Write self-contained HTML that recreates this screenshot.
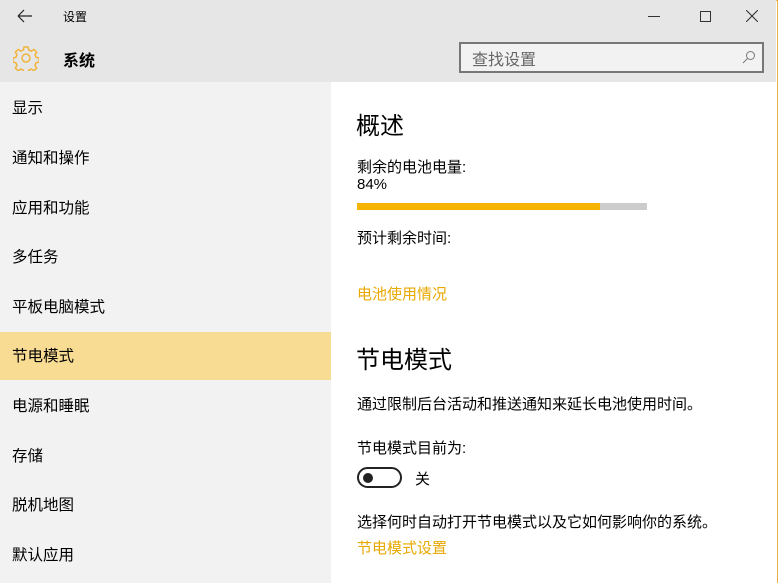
<!DOCTYPE html>
<html><head><meta charset="utf-8"><style>
*{margin:0;padding:0;box-sizing:border-box}
body{width:778px;height:583px;overflow:hidden;font-family:"Liberation Sans","Noto Sans CJK SC",sans-serif;background:#fff;position:relative;color:#000}
.win{position:absolute;left:0;top:0;width:778px;height:583px;border:1px solid #e8b04a;border-bottom:none}
.hdr{position:absolute;left:0;top:0;width:776px;height:82px;background:#e6e6e6}
.side{position:absolute;left:0;top:82px;width:331px;height:501px;background:#f2f2f2}
.it{position:absolute;left:12px;font-size:15.5px;line-height:20px}
.sel{position:absolute;left:0;top:332px;width:331px;height:48px;background:#f8dc94}
.t{position:absolute;white-space:nowrap}
.c{font-size:15px}
</style></head><body>
<div class="win"></div>
<div class="hdr"></div>
<svg class="t" style="left:17px;top:9px" width="16" height="14"><path d="M1 7H15M1 7L7 1M1 7L7 13" stroke="#222" stroke-width="1.2" fill="none"/></svg>
<div class="t" style="left:63px;top:8px;font-size:12px">设置</div>
<div class="t" style="left:648px;top:16px;width:12px;height:1px;background:#333"></div>
<div class="t" style="left:700px;top:11px;width:11px;height:11px;border:1px solid #333"></div>
<svg class="t" style="left:746px;top:10px" width="12" height="12"><path d="M0 0L12 12M12 0L0 12" stroke="#333" stroke-width="1.1"/></svg>
<svg class="t" style="left:13px;top:45px" width="26" height="26" viewBox="0 0 26 26"><g fill="none" stroke="#f0b43c" stroke-width="1.5"><circle cx="13" cy="13" r="4"/><path d="M11 2h4l.7 3 2.6 1.1 2.6-1.7 2.8 2.8-1.7 2.6 1.1 2.6 3 .7v4l-3 .7-1.1 2.6 1.7 2.6-2.8 2.8-2.6-1.7-2.6 1.1-.7 3h-4l-.7-3-2.6-1.1-2.6 1.7-2.8-2.8 1.7-2.6-1.1-2.6-3-.7v-4l3-.7 1.1-2.6-1.7-2.6 2.8-2.8 2.6 1.7 2.6-1.1z"/></g></svg>
<div class="t" style="left:63px;top:47px;font-size:16px;font-weight:bold">系统</div>
<div class="t" style="left:459px;top:42px;width:305px;height:31px;border:2px solid #777;background:#f2f2f2"></div>
<div class="t" style="left:472px;top:46px;font-size:16px;color:#666">查找设置</div>
<svg class="t" style="left:742px;top:50px" width="14" height="14"><circle cx="8.5" cy="5.5" r="4" fill="none" stroke="#777"/><path d="M5.5 8.5L1 13" stroke="#777"/></svg>
<div class="side"></div>
<div class="sel"></div>
<div class="it" style="top:99px">显示</div>
<div class="it" style="top:149px">通知和操作</div>
<div class="it" style="top:199px">应用和功能</div>
<div class="it" style="top:248px">多任务</div>
<div class="it" style="top:298px">平板电脑模式</div>
<div class="it" style="top:347px">节电模式</div>
<div class="it" style="top:397px">电源和睡眠</div>
<div class="it" style="top:447px">存储</div>
<div class="it" style="top:496px">脱机地图</div>
<div class="it" style="top:546px">默认应用</div>
<div class="t" style="left:356px;top:106px;font-size:24px">概述</div>
<div class="t c" style="left:357px;top:156px">剩余的电池电量:</div>
<div class="t c" style="left:357px;top:176px">84%</div>
<div class="t" style="left:357px;top:203px;width:290px;height:7px;background:#ccc"></div>
<div class="t" style="left:357px;top:203px;width:243px;height:7px;background:#f4b400"></div>
<div class="t c" style="left:357px;top:227px">预计剩余时间:</div>
<div class="t c" style="left:357px;top:283px;color:#e8a800">电池使用情况</div>
<div class="t" style="left:356px;top:340px;font-size:24px">节电模式</div>
<div class="t c" style="left:357px;top:393px">通过限制后台活动和推送通知来延长电池使用时间。</div>
<div class="t c" style="left:357px;top:437px">节电模式目前为:</div>
<div class="t" style="left:357px;top:467px;width:45px;height:21px;border:2px solid #222;border-radius:11px"></div>
<div class="t" style="left:363px;top:473px;width:10px;height:10px;border-radius:5px;background:#222"></div>
<div class="t c" style="left:415px;top:468px">关</div>
<div class="t c" style="left:357px;top:511px">选择何时自动打开节电模式以及它如何影响你的系统。</div>
<div class="t c" style="left:357px;top:537px;color:#e8a800">节电模式设置</div>
</body></html>
